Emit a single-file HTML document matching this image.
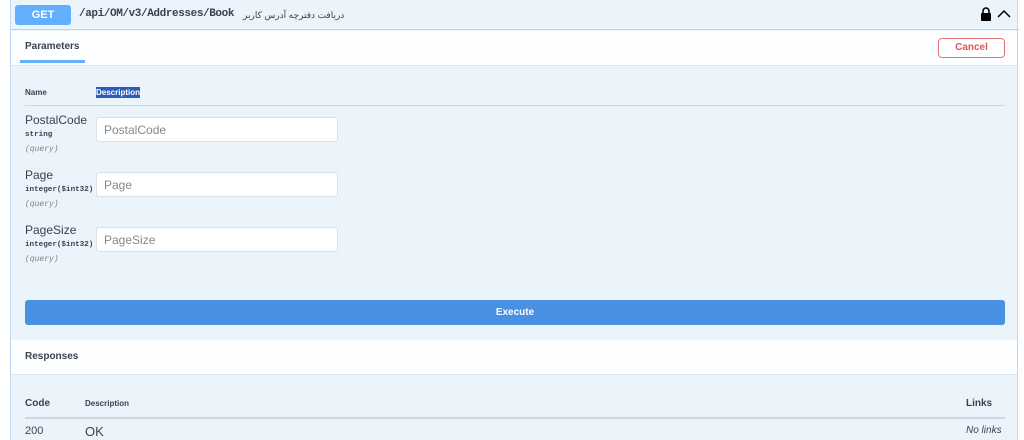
<!DOCTYPE html>
<html><head><style>
*{box-sizing:border-box;margin:0;padding:0}
html,body{width:1024px;height:440px;overflow:hidden}
body{background:#fff;font-family:"Liberation Sans",sans-serif;position:relative}
.box{position:absolute;left:10px;top:0;width:1008px;height:450px;background:#ebf3fb;border:1px solid #bcd8f3;border-top:none;border-radius:0 0 4px 4px}
.hdr{position:absolute;left:0;top:0;width:1008px;height:30px;border-bottom:1px solid #b9d4ef}
.get{position:absolute;left:4px;top:5px;width:56px;height:20px;background:#61affe;color:#fff;border-radius:3px;font-weight:bold;font-size:11px;text-align:center;line-height:20px}
.path{position:absolute;left:68px;top:8px;font-family:"Liberation Mono",monospace;font-weight:bold;font-size:11px;letter-spacing:-0.4px;color:#3b4151}
.desc{position:absolute;left:232px;top:10px;font-size:9px;color:#3b4151;font-family:"Liberation Sans","Noto Sans CJK SC",sans-serif}
.sec{position:absolute;left:0;width:1006px;background:rgba(255,255,255,.85)}
.tab{position:absolute;left:14px;top:10px;font-size:10px;font-weight:bold;color:#3b4151}
.tabline{position:absolute;left:9px;top:29px;width:65px;height:3px;background:#61affe}
.cancel{position:absolute;left:927px;top:7px;width:67px;height:20px;border:1.5px solid #e27373;border-radius:4px;color:#e05555;font-weight:bold;font-size:10px;text-align:center;line-height:17px;background:#fff}
.lab{position:absolute;font-size:12px;color:#3b4151}
.small{position:absolute;font-family:"Liberation Mono",monospace;font-size:7.6px;font-weight:bold;color:#3b4151}
.q{position:absolute;font-family:"Liberation Mono",monospace;font-size:8px;font-style:italic;color:#808080}
.inp{position:absolute;left:85px;width:242px;height:25px;background:#fff;border:1px solid #d9e0e7;border-radius:3px;font-size:12px;color:#888;padding:5px 7px}
.exec{position:absolute;left:14px;top:300px;width:980px;height:25px;background:#4990e2;border-radius:3px;color:#fff;font-weight:bold;font-size:10px;text-align:center;line-height:25px}
</style></head><body>
<div class="box">
 <div class="hdr">
  <div class="get">GET</div>
  <div class="path">/api/OM/v3/Addresses/Book</div>
  <div class="desc">دریافت دفترچه آدرس کاربر</div>
  <svg style="position:absolute;left:969px;top:7px" width="12" height="14" viewBox="0 0 12 14"><path d="M3 6V4a3 3 0 0 1 6 0v2" fill="none" stroke="#000" stroke-width="1.6"/><rect x="1" y="6" width="10" height="8" rx="1" fill="#000"/></svg>
  <svg style="position:absolute;left:986px;top:9px" width="14" height="9" viewBox="0 0 14 9"><path d="M1 8L7 2l6 6" fill="none" stroke="#000" stroke-width="1.5"/></svg>
 </div>
 <div class="sec" style="top:31px;height:35px;border-bottom:1px solid #dde6ef">
  <div class="tab">Parameters</div><div class="tabline"></div>
  <div class="cancel">Cancel</div>
 </div>
 <div class="lab" style="left:14px;top:88px;font-size:8px;font-weight:bold">Name</div>
 <div class="lab" style="left:85px;top:87px;font-size:8px;font-weight:bold;background:#2b5db8;color:#fff;padding:1px 0">Description</div>
 <div style="position:absolute;left:14px;top:105px;width:980px;height:1px;background:#cfd6de"></div>

 <div class="lab" style="left:14px;top:113px">PostalCode</div>
 <div class="small" style="left:14px;top:131px">string</div>
 <div class="q" style="left:14px;top:145px">(query)</div>
 <div class="inp" style="top:117px">PostalCode</div>

 <div class="lab" style="left:14px;top:168px">Page</div>
 <div class="small" style="left:14px;top:186px">integer($int32)</div>
 <div class="q" style="left:14px;top:200px">(query)</div>
 <div class="inp" style="top:172px">Page</div>

 <div class="lab" style="left:14px;top:223px">PageSize</div>
 <div class="small" style="left:14px;top:241px">integer($int32)</div>
 <div class="q" style="left:14px;top:255px">(query)</div>
 <div class="inp" style="top:227px">PageSize</div>

 <div class="exec">Execute</div>
 <div class="sec" style="top:340px;height:35px;border-bottom:1px solid #dde6ef">
  <div class="tab" style="top:11px">Responses</div>
 </div>
 <div class="lab" style="left:14px;top:398px;font-size:10px;font-weight:bold">Code</div>
 <div class="lab" style="left:74px;top:399px;font-size:8px;font-weight:bold">Description</div>
 <div class="lab" style="left:955px;top:398px;font-size:10px;font-weight:bold">Links</div>
 <div style="position:absolute;left:14px;top:417px;width:980px;height:2px;background:#cfd6de"></div>
 <div class="lab" style="left:14px;top:425px;font-size:11px">200</div>
 <div class="lab" style="left:74px;top:424px;font-size:13px">OK</div>
 <div class="lab" style="left:955px;top:425px;font-size:10px;font-style:italic">No links</div>
</div>
</body></html>
